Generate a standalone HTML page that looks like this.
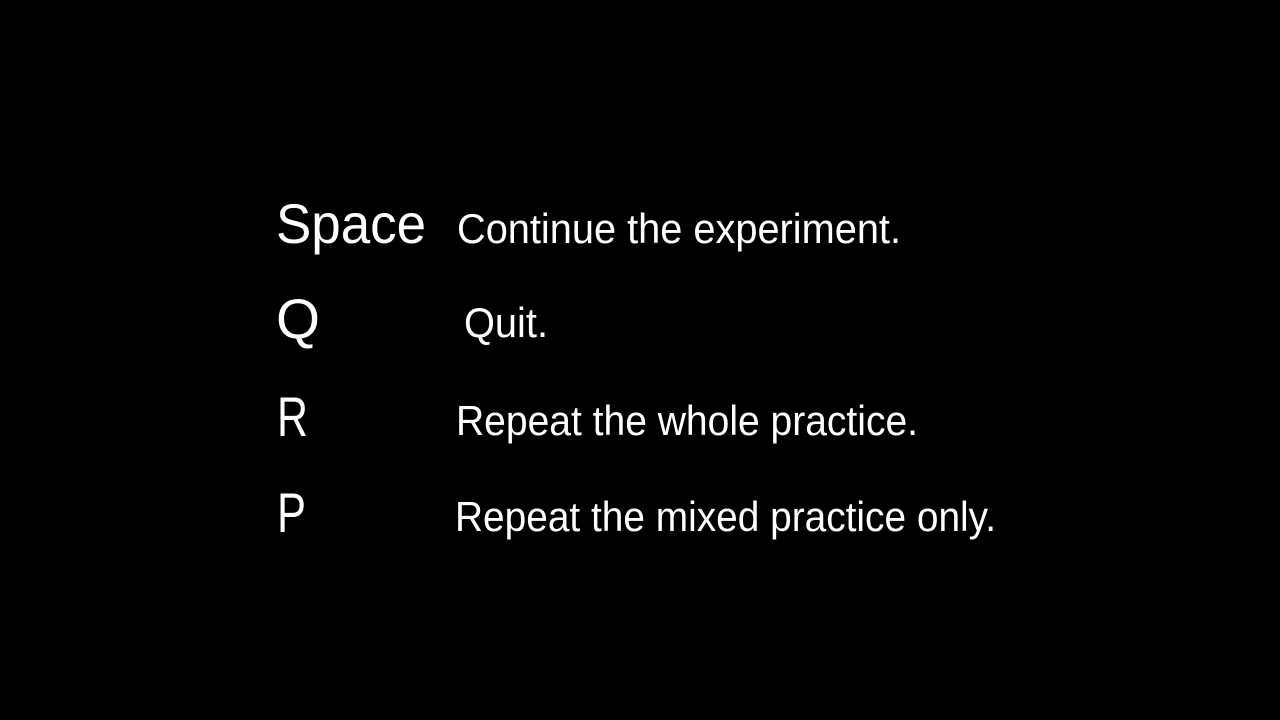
<!DOCTYPE html>
<html><head><meta charset="utf-8"><style>
html,body{margin:0;padding:0;background:#000;width:1280px;height:720px;overflow:hidden}
.t{position:absolute;color:#fff;font-family:"Liberation Sans",sans-serif;line-height:1;white-space:nowrap;transform-origin:0 0}
.k{font-size:56px}
.d{font-size:42px}
</style></head><body>
<span class="t k" style="left:276px;top:196px" data-w="150">Space</span>
<span class="t d" style="left:457px;top:208px" data-w="444">Continue the experiment.</span>
<span class="t k" style="left:276px;top:291px" data-w="44">Q</span>
<span class="t d" style="left:464px;top:302px" data-w="84">Quit.</span>
<span class="t k" style="left:277px;top:389px" data-w="31">R</span>
<span class="t d" style="left:456px;top:400px" data-w="462">Repeat the whole practice.</span>
<span class="t k" style="left:277px;top:485px" data-w="29">P</span>
<span class="t d" style="left:455px;top:496px" data-w="541">Repeat the mixed practice only.</span>
<script>
document.querySelectorAll('.t').forEach(function(e){
 var w=e.getBoundingClientRect().width, t=+e.dataset.w;
 if(w>0) e.style.transform='scaleX('+(t/w)+')';
});
</script>
</body></html>
